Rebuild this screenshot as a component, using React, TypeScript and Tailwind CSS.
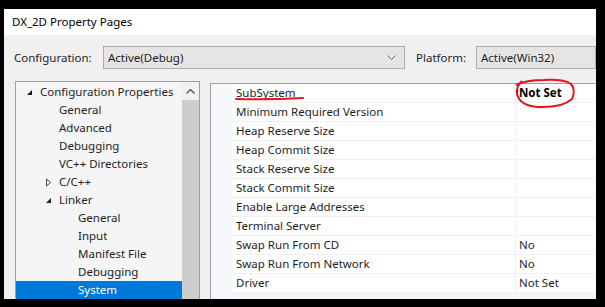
import React from "react";

const font = { fontFamily: '"Noto Sans", "Liberation Sans", sans-serif' };

type TreeItem = { label: string; depth: number; expander?: "open" | "closed"; selected?: boolean };

const tree: TreeItem[] = [
  { label: "Configuration Properties", depth: 0, expander: "open" },
  { label: "General", depth: 1 },
  { label: "Advanced", depth: 1 },
  { label: "Debugging", depth: 1 },
  { label: "VC++ Directories", depth: 1 },
  { label: "C/C++", depth: 1, expander: "closed" },
  { label: "Linker", depth: 1, expander: "open" },
  { label: "General", depth: 2 },
  { label: "Input", depth: 2 },
  { label: "Manifest File", depth: 2 },
  { label: "Debugging", depth: 2 },
  { label: "System", depth: 2, selected: true },
];

const props: [string, string][] = [
  ["SubSystem", "Not Set"],
  ["Minimum Required Version", ""],
  ["Heap Reserve Size", ""],
  ["Heap Commit Size", ""],
  ["Stack Reserve Size", ""],
  ["Stack Commit Size", ""],
  ["Enable Large Addresses", ""],
  ["Terminal Server", ""],
  ["Swap Run From CD", "No"],
  ["Swap Run From Network", "No"],
  ["Driver", "Not Set"],
];

function Expander({ kind }: { kind: "open" | "closed" }) {
  if (kind === "open") {
    return (
      <svg width="7" height="7" viewBox="0 0 7 7">
        <path d="M6 1 L6 6 L1 6 Z" fill="#1e1e1e" />
      </svg>
    );
  }
  return (
    <svg width="7" height="9" viewBox="0 0 7 9">
      <path d="M1.5 1 L5.5 4.5 L1.5 8 Z" fill="none" stroke="#444" strokeWidth="1" />
    </svg>
  );
}

export default function App() {
  return (
    <div className="w-[605px] h-[307px] bg-black pt-[9px] pl-[4px] pr-[9px] pb-[8px]" style={font}>
      <div className="relative w-full h-full bg-[#f0f0f0] flex flex-col overflow-hidden text-[11.5px] text-[#1e1e1e]">
        {/* title bar */}
        <div className="h-[26px] shrink-0 bg-white flex items-center pl-[8px] text-black">
          DX_2D Property Pages
        </div>

        {/* configuration row */}
        <div className="mt-[11px] h-[23px] shrink-0 flex items-center">
          <div className="w-[99px] pl-[10px]">Configuration:</div>
          <div className="w-[302px] h-full border border-[#adadad] bg-[#e5e5e5] flex items-center pl-[4px] pr-[8px]">
            <span className="flex-1">Active(Debug)</span>
            <svg width="9" height="5" viewBox="0 0 9 5">
              <path d="M0.5 0.5 L4.5 4.5 L8.5 0.5" fill="none" stroke="#666" strokeWidth="1" />
            </svg>
          </div>
          <div className="w-[71px] pl-[11px]">Platform:</div>
          <div className="flex-1 h-full border border-[#adadad] bg-[#e5e5e5] flex items-center pl-[4px]">
            Active(Win32)
          </div>
        </div>

        {/* body */}
        <div className="mt-[12px] flex flex-1 min-h-0 items-start">
          {/* tree */}
          <div className="ml-[11px] w-[185px] h-[240px] shrink-0 border border-[#a0a0a0] bg-[#f5f5f5] flex">
            <div className="flex-1 pt-[1px]">
              {tree.map((t, i) => (
                <div
                  key={i}
                  className={`h-[18px] flex items-center ${t.selected ? "bg-[#0078d7] text-white" : ""}`}
                  style={{ paddingLeft: 8 + t.depth * 19 }}
                >
                  <div className="w-[10px] flex items-center justify-center">
                    {t.expander && <Expander kind={t.expander} />}
                  </div>
                  <span className="ml-[6px] whitespace-nowrap">{t.label}</span>
                </div>
              ))}
            </div>
            <div className="w-[17px] flex flex-col bg-[#f0f0f0]">
              <div className="h-[18px] flex items-center justify-center">
                <svg width="9" height="5" viewBox="0 0 9 5">
                  <path d="M0.5 4.5 L4.5 0.5 L8.5 4.5" fill="none" stroke="#606060" strokeWidth="1.5" />
                </svg>
              </div>
              <div className="flex-1 bg-[#cdcdcd]"></div>
            </div>
          </div>

          {/* property grid */}
          <div className="ml-[10px] mt-[2px] flex-1 h-[240px] border-l border-t border-[#a0a0a0] bg-[#f5f7fb] flex">
            <div className="w-[21px] shrink-0"></div>
            <div className="flex-1">
              {props.map(([k, v], i) => (
                <div key={i} className="h-[19px] flex bg-white border-b border-[#eef0f4]">
                  <div className="w-[284px] pl-[4px] flex items-center border-r border-[#eef0f4]">{k}</div>
                  <div className={`flex-1 pl-[3px] flex items-center ${i === 0 ? "font-bold text-black" : ""}`}>{v}</div>
                </div>
              ))}
            </div>
          </div>
        </div>

        {/* red annotations */}
        <svg className="absolute left-0 top-0 pointer-events-none" width="592" height="290">
          <path d="M232 90 Q265 91 299 89" fill="none" stroke="#e8141c" strokeWidth="2" strokeLinecap="round" />
          <path
            d="M518 72 Q512 77 513 85 Q516 97 534 98 Q558 99 568 90 Q572 81 567 75 Q560 70 540 71 Q522 71 512 76"
            fill="none"
            stroke="#e8141c"
            strokeWidth="2"
          />
        </svg>
      </div>
    </div>
  );
}
